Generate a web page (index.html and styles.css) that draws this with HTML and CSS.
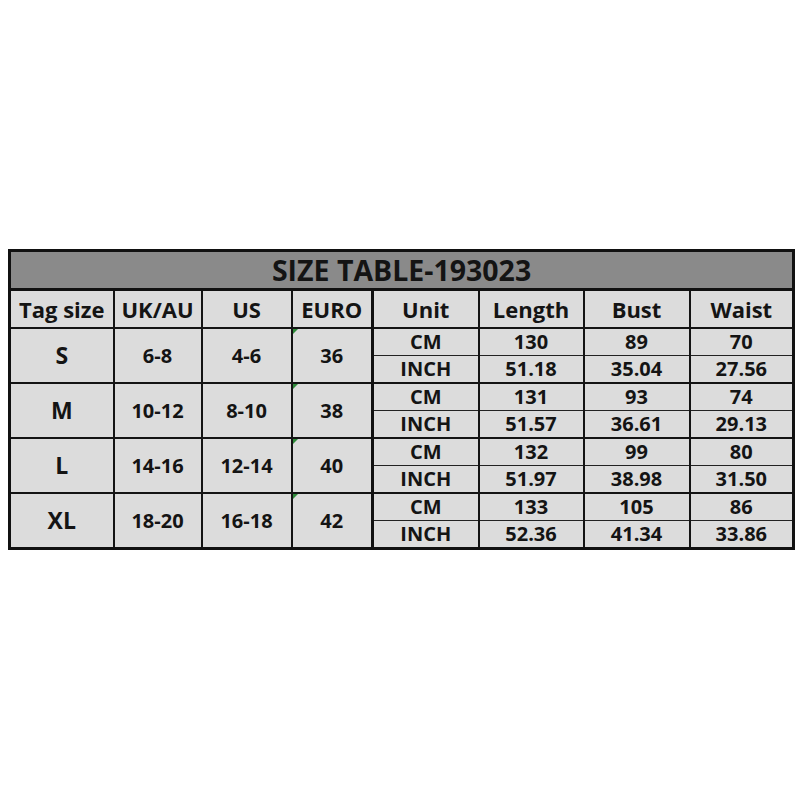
FILE: index.html
```html
<!DOCTYPE html>
<html>
<head>
<meta charset="utf-8">
<link rel="stylesheet" href="styles.css">
</head>
<body>
<div class="sheet">
<table class="size-table">
  <colgroup>
    <col class="c-tag"><col class="c-uk"><col class="c-us"><col class="c-euro">
    <col class="c-unit"><col class="c-len"><col class="c-bust"><col class="c-waist">
  </colgroup>
  <thead>
    <tr class="title-row"><th colspan="8">SIZE TABLE-193023</th></tr>
    <tr class="head-row">
      <th>Tag size</th><th>UK/AU</th><th>US</th><th>EURO</th>
      <th class="unit">Unit</th><th>Length</th><th>Bust</th><th>Waist</th>
    </tr>
  </thead>
  <tbody>
    <tr class="cm"><td rowspan="2" class="tag">S</td><td rowspan="2">6-8</td><td rowspan="2">4-6</td><td rowspan="2" class="euro">36</td><td class="unit">CM</td><td>130</td><td>89</td><td>70</td></tr>
    <tr class="inch"><td class="unit">INCH</td><td>51.18</td><td>35.04</td><td>27.56</td></tr>
    <tr class="cm"><td rowspan="2" class="tag">M</td><td rowspan="2">10-12</td><td rowspan="2">8-10</td><td rowspan="2" class="euro">38</td><td class="unit">CM</td><td>131</td><td>93</td><td>74</td></tr>
    <tr class="inch"><td class="unit">INCH</td><td>51.57</td><td>36.61</td><td>29.13</td></tr>
    <tr class="cm"><td rowspan="2" class="tag">L</td><td rowspan="2">14-16</td><td rowspan="2">12-14</td><td rowspan="2" class="euro">40</td><td class="unit">CM</td><td>132</td><td>99</td><td>80</td></tr>
    <tr class="inch"><td class="unit">INCH</td><td>51.97</td><td>38.98</td><td>31.50</td></tr>
    <tr class="cm"><td rowspan="2" class="tag">XL</td><td rowspan="2">18-20</td><td rowspan="2">16-18</td><td rowspan="2" class="euro">42</td><td class="unit">CM</td><td>133</td><td>105</td><td>86</td></tr>
    <tr class="inch"><td class="unit">INCH</td><td>52.36</td><td>41.34</td><td>33.86</td></tr>
  </tbody>
</table>
</div>
</body>
</html>
```
FILE: styles.css
```css
html, body {
  margin: 0;
  padding: 0;
  background: #ffffff;
}
.sheet {
  width: 800px;
  height: 800px;
  padding: 249px 0 0 8px;
  box-sizing: border-box;
}
.size-table {
  border-collapse: collapse;
  table-layout: fixed;
  width: 784px;
  font-family: "Open Sans", "DejaVu Sans", sans-serif;
  font-weight: 700;
  color: #141414;
  border: 3px solid #111;
}
.c-tag { width: 104px; }
.c-uk { width: 88px; }
.c-us { width: 90px; }
.c-euro { width: 81px; }
.c-unit { width: 106px; }
.c-len { width: 105px; }
.c-bust { width: 106px; }
.c-waist { width: 104px; }

.size-table th,
.size-table td {
  border: 2px solid #141414;
  background: #dcdcdc;
  text-align: center;
  vertical-align: middle;
  padding: 0;
  line-height: 1;
}
.title-row th {
  background: #8a8a8a;
  height: 36px;
  font-size: 28.5px;
  border-bottom: 3px solid #111;
  font-weight: 700;
}
.head-row th {
  height: 36px;
  font-size: 22px;
  font-weight: 700;
}
.head-row th.unit {
  border-left: 3px solid #111;
}
.size-table td {
  font-size: 20px;
  height: 26px;
}
.size-table tr.cm td.unit,
.size-table tr.cm td.unit ~ td {
  border-bottom: 1px solid #222;
}
.size-table tr.inch td {
  border-top: 1px solid #222;
}
.size-table td.unit {
  border-left: 3px solid #111;
}
.size-table td.tag {
  font-size: 23px;
}
.size-table td.euro {
  position: relative;
}
.size-table td.euro::before {
  content: "";
  position: absolute;
  left: 0;
  top: 0;
  width: 0;
  height: 0;
  border-top: 5px solid #2f8a3a;
  border-right: 5px solid transparent;
}
```
